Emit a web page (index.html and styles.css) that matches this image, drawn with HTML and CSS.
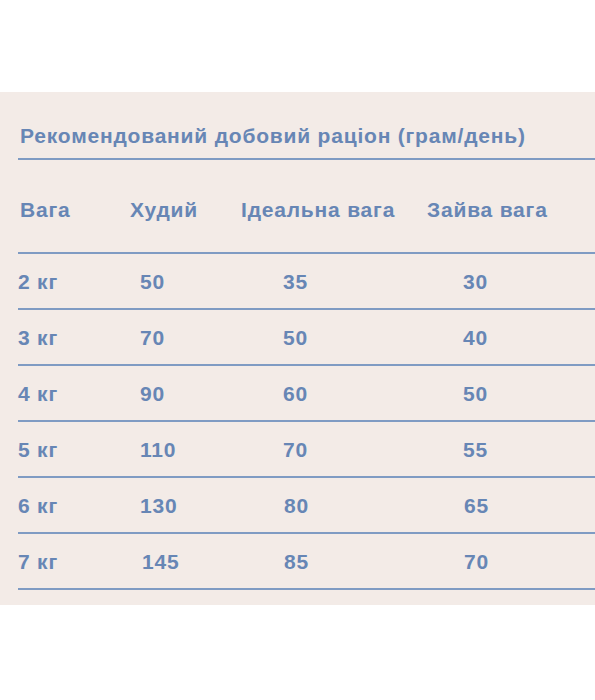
FILE: index.html
```html
<!DOCTYPE html>
<html lang="uk">
<head>
<meta charset="utf-8">
<title>Рекомендований добовий раціон</title>
<link rel="stylesheet" href="styles.css">
</head>
<body>
<div class="spacer"></div>
<section class="panel">
  <h2 class="title">Рекомендований добовий раціон (грам/день)</h2>
  <div class="row head">
    <span class="c1">Вага</span>
    <span class="c2">Худий</span>
    <span class="c3">Ідеальна вага</span>
    <span class="c4">Зайва вага</span>
  </div>
  <div class="row">
    <span class="c1">2 кг</span><span class="c2 n">50</span><span class="c3 n">35</span><span class="c4 n">30</span>
  </div>
  <div class="row">
    <span class="c1">3 кг</span><span class="c2 n">70</span><span class="c3 n">50</span><span class="c4 n">40</span>
  </div>
  <div class="row">
    <span class="c1">4 кг</span><span class="c2 n">90</span><span class="c3 n">60</span><span class="c4 n">50</span>
  </div>
  <div class="row">
    <span class="c1">5 кг</span><span class="c2 n">110</span><span class="c3 n">70</span><span class="c4 n">55</span>
  </div>
  <div class="row">
    <span class="c1">6 кг</span><span class="c2 n">130</span><span class="c3 n alt">80</span><span class="c4 n alt">65</span>
  </div>
  <div class="row">
    <span class="c1">7 кг</span><span class="c2 n alt">145</span><span class="c3 n alt">85</span><span class="c4 n alt">70</span>
  </div>
</section>
</body>
</html>
```
FILE: styles.css
```css
html, body {
  margin: 0;
  padding: 0;
  background: #ffffff;
}
body {
  font-family: "Liberation Sans", Arial, sans-serif;
  color: #6786b5;
  font-weight: bold;
}
.spacer {
  height: 92px;
}
.panel {
  background: #f3ebe7;
  padding: 0 0 15px 18px;
}
.title {
  margin: 0;
  padding: 32px 0 10px 2px;
  font-size: 21px;
  line-height: 24px;
  font-weight: bold;
  letter-spacing: 0.8px;
  border-bottom: 2px solid #7f9bc3;
}
.row {
  display: grid;
  grid-template-columns: 112px 111px 186px 1fr;
  padding: 16px 0 14px 0;
  font-size: 21px;
  line-height: 24px;
  letter-spacing: 0.8px;
  border-bottom: 2px solid #7f9bc3;
}
.row.head {
  padding: 38px 0 30px 0;
}
.head .c1 { padding-left: 2px; }
.n.c2 { padding-left: 10px; }
.n.c3 { padding-left: 42px; }
.n.c4 { padding-left: 36px; }
.n.c2.alt { padding-left: 12px; }
.n.c3.alt { padding-left: 43px; }
.n.c4.alt { padding-left: 37px; }
```
